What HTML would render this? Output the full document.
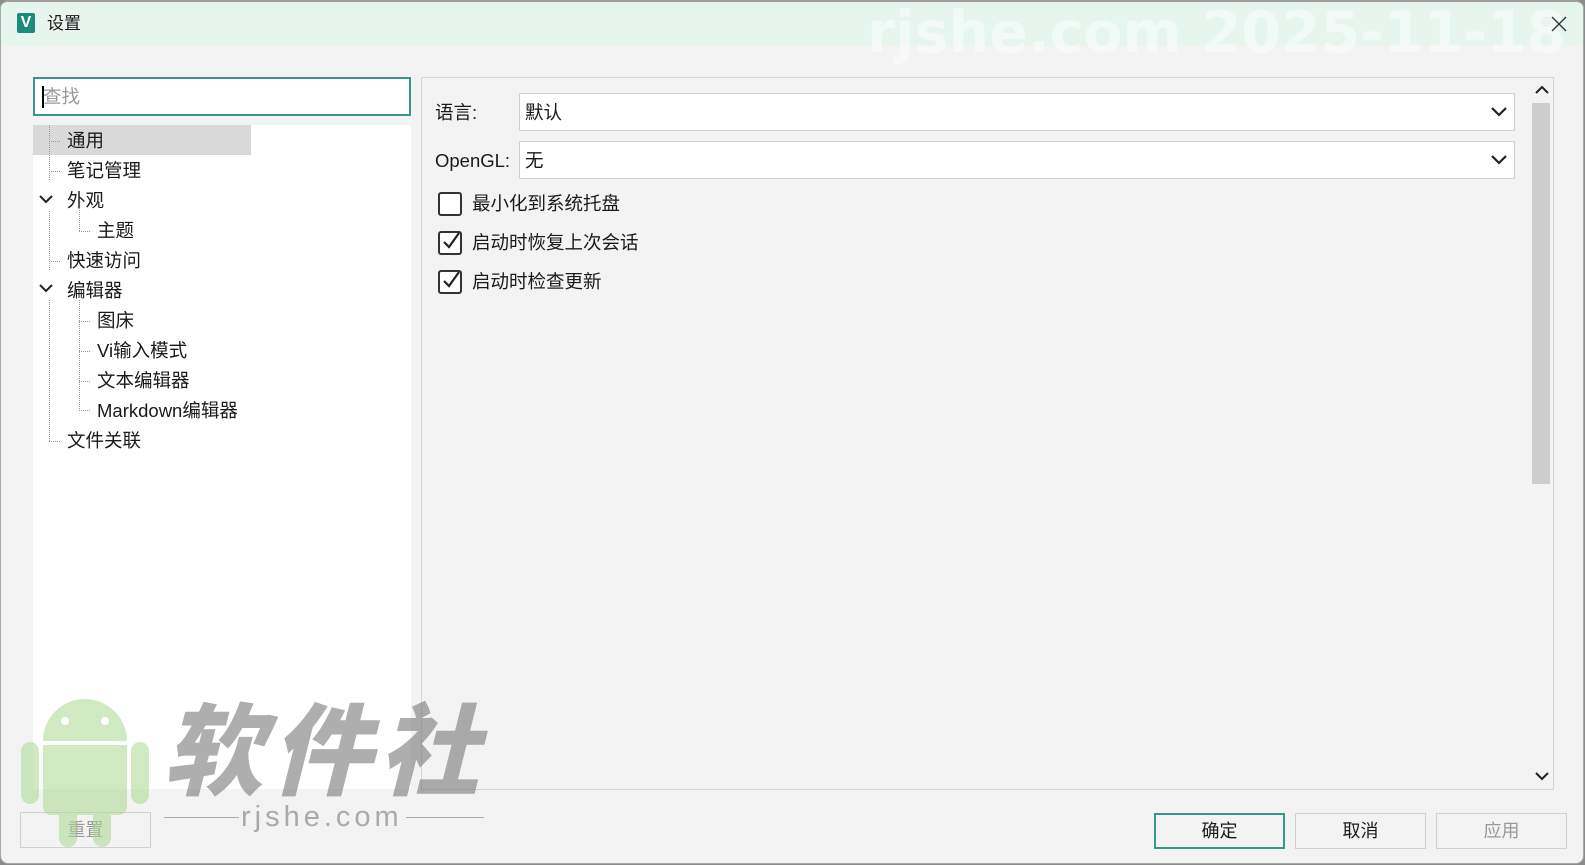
<!DOCTYPE html>
<html><head><meta charset="utf-8">
<style>
*{margin:0;padding:0;box-sizing:border-box}
body{width:1585px;height:865px;overflow:hidden;background:#8a8a8a;font-family:"Liberation Sans","Noto Sans CJK SC",sans-serif;color:#1a1a1a;position:relative}
.a{position:absolute}
#dlg{left:0;top:0;width:1584px;height:864px;background:#f3f3f3;border:1px solid #a8a8a8;border-top:2px solid #9e9e9e;border-radius:8px;overflow:hidden}
.t{font-size:18.5px;line-height:24px;white-space:nowrap}
.cb{width:24px;height:24px;border:2px solid #333;border-radius:3px;background:#fff}
.btn{height:36px;width:131px;border:1px solid #d0d0d0;background:#f3f3f3;font-size:18px;text-align:center;line-height:34px}
</style></head><body>
<div id="dlg" class="a">
  <div class="a" style="left:0;top:0;width:1584px;height:44px;background:#e6f6ee"></div>
  <div class="a" style="left:866px;top:-4px;font-size:57px;font-weight:bold;color:rgba(255,255,255,0.45);white-space:nowrap;font-family:'DejaVu Sans',sans-serif;line-height:70px">rjshe.com 2025-11-18</div>
  <div class="a" style="left:16px;top:11px;width:18px;height:20px;background:#1c8a7c;border-radius:2px;color:#fff;font-weight:bold;font-size:16px;line-height:19px;text-align:center">V</div>
  <div class="a t" style="left:46px;top:10px;font-size:17px">设置</div>
  <svg class="a" style="left:1548px;top:12px" width="20" height="20"><path d="M3 3L17 17M17 3L3 17" stroke="#333" stroke-width="1.4"/></svg>

  <div class="a" style="left:32px;top:75px;width:378px;height:39px;background:#fff;border:2px solid #3a958c"></div>
  <div class="a" style="left:41px;top:84px;width:2px;height:22px;background:#000"></div>
  <div class="a t" style="left:42px;top:83px;color:#999">查找</div>

  <div class="a" style="left:32px;top:123px;width:378px;height:664px;background:#fff"></div>
  <div class="a" style="left:32px;top:123px;width:218px;height:30px;background:#d9d9d9"></div>
  <svg class="a" style="left:32px;top:123px" width="100" height="330">
    <g stroke="#999" stroke-dasharray="1 1" stroke-width="1">
      <path d="M16.5 0V55M16.5 86V145M16.5 175V317"/>
      <path d="M16 16.5H28M16 46.5H28M16 136.5H28M16 316.5H28"/>
      <path d="M46.5 85V107M46 106.5H58"/>
      <path d="M46.5 175V286M46 196.5H58M46 226.5H58M46 256.5H58M46 285.5H58"/>
    </g>
    <path d="M7 71L13 77L19 71M7 160L13 166L19 160" stroke="#222" stroke-width="2" fill="none"/>
  </svg>
  <div class="a t" style="left:66px;top:127px">通用</div>
  <div class="a t" style="left:66px;top:157px">笔记管理</div>
  <div class="a t" style="left:66px;top:187px">外观</div>
  <div class="a t" style="left:96px;top:217px">主题</div>
  <div class="a t" style="left:66px;top:247px">快速访问</div>
  <div class="a t" style="left:66px;top:277px">编辑器</div>
  <div class="a t" style="left:96px;top:307px">图床</div>
  <div class="a t" style="left:96px;top:337px">Vi输入模式</div>
  <div class="a t" style="left:96px;top:367px">文本编辑器</div>
  <div class="a t" style="left:96px;top:397px">Markdown编辑器</div>
  <div class="a t" style="left:66px;top:427px">文件关联</div>

  <div class="a" style="left:420px;top:75px;width:1133px;height:713px;border:1px solid #d3d3d3"></div>
  <div class="a t" style="left:434px;top:99px">语言:</div>
  <div class="a" style="left:518px;top:91px;width:996px;height:38px;background:#fff;border:1px solid #d0d0d0"></div>
  <div class="a t" style="left:524px;top:99px">默认</div>
  <div class="a t" style="left:434px;top:147px">OpenGL:</div>
  <div class="a" style="left:518px;top:139px;width:996px;height:38px;background:#fff;border:1px solid #d0d0d0"></div>
  <div class="a t" style="left:524px;top:147px">无</div>
  <svg class="a" style="left:1488px;top:100px" width="20" height="70"><path d="M3 6L10 13L17 6M3 54L10 61L17 54" stroke="#222" stroke-width="2.2" fill="none"/></svg>

  <div class="a cb" style="left:437px;top:190px"></div>
  <div class="a t" style="left:471px;top:190px">最小化到系统托盘</div>
  <div class="a cb" style="left:437px;top:229px"></div>
  <div class="a t" style="left:471px;top:229px">启动时恢复上次会话</div>
  <div class="a cb" style="left:437px;top:268px"></div>
  <div class="a t" style="left:471px;top:268px">启动时检查更新</div>
  <svg class="a" style="left:437px;top:225px" width="30" height="90"><path d="M6 15L11 20L21 6M6 54L11 59L21 45" stroke="#222" stroke-width="2.2" fill="none"/></svg>

  <svg class="a" style="left:1532px;top:82px" width="18" height="12"><path d="M3 9L9 3L15 9" stroke="#222" stroke-width="2" fill="none"/></svg>
  <div class="a" style="left:1531px;top:101px;width:18px;height:381px;background:#cdcdcd"></div>
  <svg class="a" style="left:1532px;top:768px" width="18" height="12"><path d="M3 3L9 9L15 3" stroke="#222" stroke-width="2" fill="none"/></svg>

  <div class="a btn" style="left:19px;top:810px;color:#999">重置</div>
  <div class="a btn" style="left:1153px;top:811px;border:2px solid #3a958c;line-height:32px">确定</div>
  <div class="a btn" style="left:1294px;top:811px">取消</div>
  <div class="a btn" style="left:1435px;top:811px;color:#999">应用</div>

  <div class="a" style="left:20px;top:685px;width:130px;height:160px;opacity:0.55">
    <div class="a" style="left:22px;top:12px;width:84px;height:42px;background:#a9d98f;border-radius:42px 42px 0 0"></div>
    <div class="a" style="left:22px;top:58px;width:84px;height:70px;background:#a9d98f;border-radius:0 0 8px 8px"></div>
    <div class="a" style="left:0;top:55px;width:18px;height:62px;background:#a9d98f;border-radius:9px"></div>
    <div class="a" style="left:110px;top:55px;width:18px;height:62px;background:#a9d98f;border-radius:9px"></div>
    <div class="a" style="left:38px;top:120px;width:18px;height:40px;background:#a9d98f;border-radius:9px"></div>
    <div class="a" style="left:72px;top:120px;width:18px;height:40px;background:#a9d98f;border-radius:9px"></div>
    <div class="a" style="left:40px;top:30px;width:8px;height:8px;background:#fff;border-radius:50%"></div>
    <div class="a" style="left:80px;top:30px;width:8px;height:8px;background:#fff;border-radius:50%"></div>
  </div>
  <div class="a" style="left:162px;top:696px;font-size:100px;font-weight:900;font-style:italic;color:rgba(120,120,120,0.6);letter-spacing:8px;white-space:nowrap;line-height:110px">软件社</div>
  <div class="a" style="left:163px;top:815px;width:75px;height:1px;background:#aaa"></div>
  <div class="a" style="left:240px;top:798px;font-size:29px;color:#aaa;letter-spacing:4px;line-height:34px">rjshe.com</div>
  <div class="a" style="left:405px;top:815px;width:78px;height:1px;background:#aaa"></div>
</div>
</body></html>
